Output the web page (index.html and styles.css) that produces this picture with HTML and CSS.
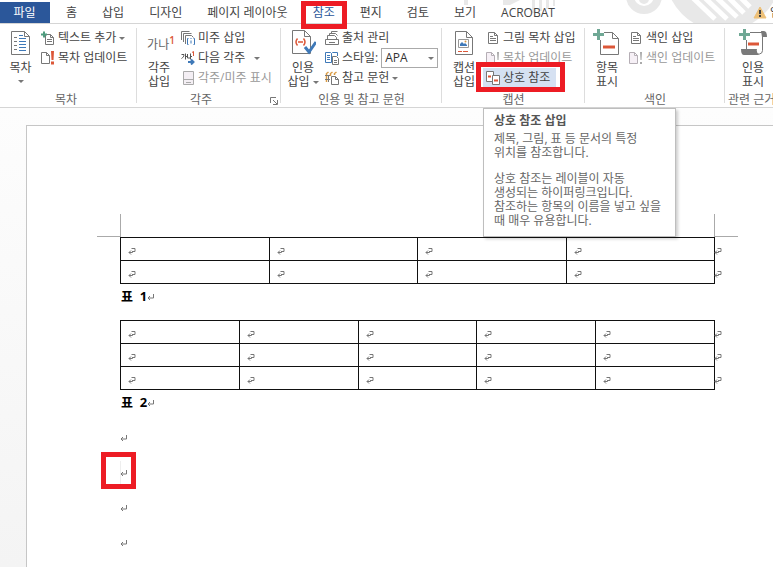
FILE: index.html
```html
<!DOCTYPE html>
<html lang="ko">
<head>
<meta charset="utf-8">
<title>문서</title>
<link rel="stylesheet" href="styles.css">
</head>
<body>
<svg class="symbols" aria-hidden="true">
  <symbol id="cell-mark" viewBox="0 0 8 8"><path d="M3 3.500L1 5.500l2 2M1 5.500h3.500V4M3.500 1.500h3.500v3h-2" fill="none" stroke="#777"/></symbol>
  <symbol id="para-mark" viewBox="0 0 8 8"><path d="M3 3L1 5l2 2M1 5h5.500V1" fill="none" stroke="#777"/></symbol>
  <symbol id="page" viewBox="0 0 14 14"><path d="M2.500 1.500h6l3 3v8h-9zM8.500 1.500v3h3" fill="#fff" stroke="#777"/><path d="M4 5.500h3M4 7.500h6M4 9.500h6" stroke="#777"/></symbol>
  <symbol id="page-alert-off" viewBox="0 0 14 14"><path d="M.5 1.500h5l3 3v8h-8zM5.500 1.500v3h3" fill="#f6f0f6" stroke="#b5aeb5"/><path d="M11 1h2l-.5 8h-1zM11 11h2v2h-2z" fill="#aaa"/></symbol>
</svg>
<header>
  <nav class="tabs">
    <svg class="decor" viewBox="0 0 333 23" aria-hidden="true">
      <g fill="#e8e8e8"><path d="M24 0h4v5h-4zM63 0h17l-10 5h-7zM92 0h3v13h-3zM99 0h3v11h-3zM106 0h3v9h-3zM113 0h2v6h-2z"/><circle cx="204" cy="-1" r="5"/><circle cx="283" cy="-27" r="58"/></g>
      <circle cx="204" cy="-4" r="14" fill="none" stroke="#e8e8e8" stroke-width="8"/>
      <path d="M253-2l22 21M265-2l22 21M277-2l20 19M289-2l15 15M301-2l9 9" stroke="#fff" stroke-width="5"/>
    </svg>
    <button class="tab file">파일</button>
    <button class="tab">홈</button>
    <button class="tab">삽입</button>
    <button class="tab">디자인</button>
    <button class="tab">페이지 레이아웃</button>
    <button class="tab current">참조<span class="frame frame-tab"></span></button>
    <button class="tab">편지</button>
    <button class="tab">검토</button>
    <button class="tab">보기</button>
    <button class="tab">ACROBAT</button>
    <button class="notice" aria-label="알림"><svg width="14" height="13" viewBox="0 0 14 13"><path d="M7 1l6 11H1z" fill="#edc078" stroke="#edc078" stroke-linejoin="round"/><path d="M6 4h2v4H6zM6 9h2v2H6z" fill="#444"/></svg><span>업</span></button>
  </nav>

  <div class="ribbon">
    <section class="group first">
      <div class="tools">
        <button class="large"><svg width="22" height="28" viewBox="0 0 22 28"><path d="M1.500 2.500h13l5 5v18h-18zM14.500 2.500v5h5" fill="#fff" stroke="#777"/><path d="M4 8.500h3M4 12.500h3M4 16.500h3M4 20.500h3" stroke="#777"/><path d="M9 6.500h4M9 9.500h7M9 12.500h7M9 15.500h7M9 18.500h7M9 21.500h7" stroke="#3f79b8"/></svg><span>목차</span><i class="arrow drop"></i></button>
        <div class="commands">
          <button class="small"><svg viewBox="0 0 14 14"><path d="M4.500 3.500h5l3 3v7h-8zM9.500 3.500v3h3" fill="#fff" stroke="#777"/><path d="M6 8.500h5M6 10.500h5" stroke="#777"/><path d="M0 3.500h6M3 .5v6" stroke="#4f9d7f" stroke-width="2"/></svg>텍스트 추가<i class="arrow"></i></button>
          <button class="small"><svg viewBox="0 0 14 14"><path d="M.5 1.500h5l3 3v8h-8zM5.500 1.500v3h3" fill="#fff" stroke="#777"/><path d="M10 0h3l-.5 9h-2zM10 10.500h3v3h-3z" fill="#dc5738"/></svg>목차 업데이트</button>
        </div>
      </div>
      <h2>목차</h2>
    </section>

    <section class="group notes">
      <div class="tools">
        <button class="large"><span class="footnote">가나<sup>1</sup></span><span>각주<br>삽입</span></button>
        <div class="commands">
          <button class="small"><svg viewBox="0 0 14 14"><path d="M.5 9V.5h8M2.500 11V2.500h8M4.500 13V4.500h6l2 2" fill="none" stroke="#777"/><path d="M7.500 7.500h-1v6h1M12.500 7.500h1v6h-1M10 9.500v3M10 7v1" fill="none" stroke="#3f79b8"/></svg>미주 삽입</button>
          <button class="small"><svg viewBox="0 0 14 14"><path d="M.5 3.500H3c0 2-1 3-2.500 4M4.500 2.500v6M4.500 5.500H6M6.500 3v4H9M9.500 2.500v6M9.500 5.500H11" fill="none" stroke="#555"/><path d="M11 1.500l1.500-1V5" fill="none" stroke="#dc5738"/><path d="M7 11h5M10 8.500l2.500 2.500-2.500 2.500" fill="none" stroke="#3f79b8" stroke-width="2"/></svg>다음 각주<i class="arrow far"></i></button>
          <button class="small" disabled><svg viewBox="0 0 14 14"><path d="M2.500.5h10v13h-10zM2.500 8.500h10M5 11.500h5" fill="#f4eff4" stroke="#aaa"/></svg>각주/미주 표시</button>
        </div>
      </div>
      <h2>각주</h2>
      <button class="launcher" aria-label="각주 및 미주 옵션"><svg width="8" height="8" viewBox="0 0 8 8"><path d="M.5 6V.5H6M3 3l4 4M7.500 3v4.500H3" fill="none" stroke="#777"/></svg></button>
    </section>

    <section class="group">
      <div class="tools">
        <button class="large"><svg width="26" height="28" viewBox="0 0 26 28"><path d="M2.500 1.500h12l6 6v17h-18zM14.500 1.500v6h6" fill="#fff" stroke="#777"/><path d="M7.500 9.500q-3 3.500 0 7M13.500 9.500q3 3.500 0 7M8 13h5" fill="none" stroke="#dc5738" stroke-width="1.500"/><path d="M15 18l4 5 7-10" fill="none" stroke="#3f79b8" stroke-width="3"/></svg><span>인용<br>삽입<i class="arrow"></i></span></button>
        <div class="commands">
          <button class="small"><svg viewBox="0 0 14 14"><path d="M.5 8.500h13v5H.5zM2.500 8V4.500h7l2 2V8M4.500 4V2.500h6l2 2M6.500 2V.5h6M4 11.500h6" fill="none" stroke="#777"/></svg>출처 관리</button>
          <div class="style-row"><svg viewBox="0 0 14 14"><path d="M6.500 2.500v9M6.500 11.500h-6v-10h5l1 1 1-1h5V5" fill="#fff" stroke="#3f79b8"/><path d="M2 4.500h3M2 6.500h3M2 8.500h3" stroke="#3f79b8"/><path d="M7.500 5.500h4l2 2v6h-6zM9 9.500h3M9 11.500h3" fill="#fff" stroke="#777"/></svg><label for="style">스타일:</label><span class="combo"><select id="style"><option>APA</option></select><i class="arrow"></i></span></div>
          <button class="small"><svg viewBox="0 0 14 14"><path d="M1.500 11V2.500l2-1.500M5.500 5V2.500l2-1.500M9.500 4V2.500l2-1.500" fill="none" stroke="#d99b45" stroke-width="1.500"/><path d="M0 4.500h5M0 8.500h5M3.500 4v7" stroke="#777"/><path d="M6.500 5.500h4l3 3v5h-7zM10.500 5.500v3h3" fill="#fff" stroke="#777"/></svg>참고 문헌<i class="arrow"></i></button>
        </div>
      </div>
      <h2>인용 및 참고 문헌</h2>
    </section>

    <section class="group">
      <div class="tools">
        <button class="large"><svg width="22" height="28" viewBox="0 0 22 28"><path d="M2.500 2.500h11l6 6v17h-17zM13.500 2.500v6h6" fill="#fff" stroke="#777"/><path d="M5.500 10.500h10v8h-10z" fill="#fff" stroke="#999"/><path d="M7 17v-2l2-2 2 2 1-1 2 2v1z" fill="#3f79b8"/><circle cx="12.500" cy="12.500" r="1" fill="#d99b45"/><path d="M5 22.500h4M10 22.500h5" stroke="#dc5738"/></svg><span>캡션<br>삽입</span></button>
        <div class="commands">
          <button class="small"><svg><use href="#page"/></svg>그림 목차 삽입</button>
          <button class="small" disabled><svg><use href="#page-alert-off"/></svg>목차 업데이트</button>
          <div class="anchor">
            <button class="small hover" aria-describedby="tip"><svg viewBox="0 0 14 14"><path d="M.5.5h7v10h-7z" fill="#fff" stroke="#777"/><path d="M2 5.500h3" stroke="#dc5738" stroke-width="2"/><path d="M6.500 4.500h7v9h-7z" fill="#fff" stroke="#777"/><path d="M8 9.500h4" stroke="#dc5738" stroke-width="2"/></svg>상호 참조</button>
            <span class="frame frame-command"></span>
            <div class="tooltip" id="tip" role="tooltip">
              <h3>상호 참조 삽입</h3>
              <p>제목, 그림, 표 등 문서의 특정<br>위치를 참조합니다.</p>
              <p>상호 참조는 레이블이 자동<br>생성되는 하이퍼링크입니다.<br>참조하는 항목의 이름을 넣고 싶을<br>때 매우 유용합니다.</p>
            </div>
          </div>
        </div>
      </div>
      <h2>캡션</h2>
    </section>

    <section class="group">
      <div class="tools">
        <button class="large"><svg width="28" height="28" viewBox="0 0 28 28"><path d="M7.500 3.500h12l6 6v16h-18zM19.500 3.500v6h6" fill="#fff" stroke="#777"/><path d="M0 5.500h11M5.500 0v11" stroke="#fff" stroke-width="5"/><path d="M0 5.500h11M5.500 0v11" stroke="#6fa895" stroke-width="3"/><path d="M10 18h12" stroke="#dc5738" stroke-width="3"/></svg><span>항목<br>표시</span></button>
        <div class="commands">
          <button class="small"><svg><use href="#page"/></svg>색인 삽입</button>
          <button class="small" disabled><svg><use href="#page-alert-off"/></svg>색인 업데이트</button>
        </div>
      </div>
      <h2>색인</h2>
    </section>

    <section class="group last">
      <div class="tools">
        <button class="large"><svg width="28" height="28" viewBox="0 0 28 28"><path d="M7.500 20V3.500h16v18q0 3-3 3.500H6" fill="#fff" stroke="#777"/><path d="M22 2h3q3 0 3 6h-5zM2 20h16q-1 3 2 6H5q-3 0-3-6" fill="#7a7a7a"/><path d="M0 5.500h11M5.500 0v11" stroke="#fff" stroke-width="5"/><path d="M0 5.500h11M5.500 0v11" stroke="#6fa895" stroke-width="3"/><path d="M9 15h11" stroke="#dc5738" stroke-width="3"/></svg><span>인용<br>표시</span></button>
      </div>
      <h2>관련 근거</h2>
    </section>
  </div>
</header>

<main>
  <article class="page">
    <div class="margins"><i></i><i></i></div>
    <table>
      <tr><td><svg><use href="#cell-mark"/></svg></td><td><svg><use href="#cell-mark"/></svg></td><td><svg><use href="#cell-mark"/></svg></td><td><svg><use href="#cell-mark"/></svg><svg class="row-end"><use href="#cell-mark"/></svg></td></tr>
      <tr><td><svg><use href="#cell-mark"/></svg></td><td><svg><use href="#cell-mark"/></svg></td><td><svg><use href="#cell-mark"/></svg></td><td><svg><use href="#cell-mark"/></svg><svg class="row-end"><use href="#cell-mark"/></svg></td></tr>
    </table>
    <p class="caption">표&nbsp; 1<svg><use href="#para-mark"/></svg></p>
    <table>
      <tr><td><svg><use href="#cell-mark"/></svg></td><td><svg><use href="#cell-mark"/></svg></td><td><svg><use href="#cell-mark"/></svg></td><td><svg><use href="#cell-mark"/></svg></td><td><svg><use href="#cell-mark"/></svg><svg class="row-end"><use href="#cell-mark"/></svg></td></tr>
      <tr><td><svg><use href="#cell-mark"/></svg></td><td><svg><use href="#cell-mark"/></svg></td><td><svg><use href="#cell-mark"/></svg></td><td><svg><use href="#cell-mark"/></svg></td><td><svg><use href="#cell-mark"/></svg><svg class="row-end"><use href="#cell-mark"/></svg></td></tr>
      <tr><td><svg><use href="#cell-mark"/></svg></td><td><svg><use href="#cell-mark"/></svg></td><td><svg><use href="#cell-mark"/></svg></td><td><svg><use href="#cell-mark"/></svg></td><td><svg><use href="#cell-mark"/></svg><svg class="row-end"><use href="#cell-mark"/></svg></td></tr>
    </table>
    <p class="caption">표&nbsp; 2<svg><use href="#para-mark"/></svg></p>
    <div class="blanks">
      <p class="blank"><svg><use href="#para-mark"/></svg></p>
      <p class="blank cursor"><svg><use href="#para-mark"/></svg><span class="frame frame-cursor"></span></p>
      <p class="blank"><svg><use href="#para-mark"/></svg></p>
      <p class="blank"><svg><use href="#para-mark"/></svg></p>
    </div>
  </article>
</main>
</body>
</html>
```
FILE: styles.css
```css
* { box-sizing: border-box; }

body {
  margin: 0;
  min-height: 100vh;
  display: flex;
  flex-direction: column;
  overflow: hidden;
  background: #fff;
  color: #444;
  font: 12px/14px "Open Sans", "Noto Sans CJK KR", sans-serif;
}

button {
  margin: 0;
  padding: 0;
  border: 0;
  background: none;
  color: inherit;
  font: inherit;
  white-space: nowrap;
}

button:disabled { color: #999; }
h2, h3, p { margin: 0; font-size: 12px; font-weight: 400; }
.symbols { position: absolute; width: 0; height: 0; }

.tabs {
  position: relative;
  display: flex;
  height: 24px;
  padding-top: 2px;
  border-bottom: 1px solid #d5d5d5;
}

.decor {
  position: absolute;
  top: 0;
  right: 0;
  width: 333px;
  height: 23px;
}

.tab { position: relative; padding: 0 13px 0 12px; }
.tab.file { width: 50px; margin-right: 4px; background: #2b579a; color: #fff; }
.tab.current { color: #2b579a; }

.notice {
  position: relative;
  display: flex;
  align-items: center;
  gap: 3px;
  width: 20px;
  margin-left: auto;
  overflow: hidden;
}
.notice svg { flex: none; }

.frame {
  position: absolute;
  z-index: 3;
  border: 5px solid #ed1c24;
  pointer-events: none;
}
.frame-tab { inset: -1px 1px -6px 0; }
.frame-command { inset: -6px -9px -4px -7px; }
.frame-cursor { left: -19px; top: -3px; width: 35px; height: 37px; }

.ribbon {
  display: grid;
  grid-template-columns: 137px 144px 161px 143px 140px 1fr;
  height: 84px;
  border-bottom: 1px solid #d5d5d5;
}

.group { position: relative; min-width: 0; padding-top: 4px; }
.group:not(.last)::after {
  content: "";
  position: absolute;
  inset: 4px 0 4px auto;
  border-right: 1px solid #ddd;
}
.tools { display: flex; height: 64px; }
.group h2 { color: #666; text-align: center; white-space: nowrap; line-height: 15px; }
.group.first h2 { padding-right: 5px; }
.group.notes h2 { padding-right: 16px; }
.group.first .large { width: 41px; }
.group.last { overflow: hidden; }
.group.last .large { width: 56px; }
.group.last h2 { padding-left: 3px; text-align: left; }

.large {
  display: flex;
  flex: none;
  flex-direction: column;
  align-items: center;
  width: 44px;
  padding-top: 1px;
}
.large svg { margin-bottom: 4px; }

.footnote {
  height: 32px;
  padding: 9px 0 0 4px;
  color: #666;
  font-size: 12px;
}
.footnote sup { color: #dc5738; font-weight: 600; line-height: 0; }

.commands { display: flex; flex-direction: column; align-items: flex-start; margin-left: -3px; }
.small, .style-row {
  display: flex;
  align-items: center;
  height: 20px;
  padding: 0 6px 0 3px;
}
.small svg, .style-row svg { flex: none; width: 14px; height: 14px; margin-right: 3px; }
.small.hover { background: #d5e1f2; }

.arrow {
  display: inline-block;
  border: 3px solid transparent;
  border-top-color: #777;
  border-bottom: 0;
  margin-left: 3px;
  vertical-align: middle;
}
.arrow.far { margin-left: 9px; }
.arrow.drop { margin: 5px 0 0; }

.style-row { padding-right: 0; }
.combo { position: relative; width: 57px; height: 20px; margin-left: 3px; }
.combo select {
  width: 100%;
  height: 100%;
  padding: 0 3px;
  border: 1px solid #aaa;
  border-radius: 0;
  appearance: none;
  background: #fff;
  color: #333;
  font: inherit;
}
.combo .arrow { position: absolute; right: 4px; top: 9px; pointer-events: none; }
.launcher { position: absolute; right: 3px; bottom: 2px; line-height: 0; }

.anchor { position: relative; }
.tooltip {
  position: absolute;
  z-index: 2;
  top: 40px;
  left: 0;
  width: 193px;
  padding: 5px 10px 8px;
  border: 1px solid #bebebe;
  background: #fff;
  box-shadow: 2px 2px 3px #0003;
  color: #666;
  line-height: 14px;
  white-space: nowrap;
}
.tooltip h3 { margin-bottom: 4px; color: #555; font-weight: 600; }
.tooltip p + p { margin-top: 12px; }

main {
  display: flex;
  flex: 1;
  padding: 17px 0 0 26px;
  background: linear-gradient(#fdfdfd, #f4f4f4);
}
.page {
  flex: 1;
  padding: 88px 58px 0 93px;
  border: solid #c6c6c6;
  border-width: 1px 0 0 1px;
  background: #fff;
}

.margins { display: flex; justify-content: space-between; margin: 0 -23px; }
.margins i { width: 24px; height: 23px; border: solid #aaa; border-width: 0 1px 1px 0; }
.margins i + i { border-width: 0 0 1px 1px; }

table { width: 100%; border-collapse: collapse; table-layout: fixed; }
td { position: relative; height: 23px; padding: 4px 0 0 7px; border: 1px solid #111; line-height: 0; }
.page svg { width: 8px; height: 8px; }
.row-end { position: absolute; left: 100%; top: 9px; }

.caption {
  height: 36px;
  padding: 5px 0 0 1px;
  color: #000;
  font-size: 13px;
  font-weight: 700;
  line-height: 14px;
}
.blanks { margin-top: -6px; }
.blank { position: relative; display: flex; align-items: center; height: 35px; }
.cursor::before { content: ""; position: absolute; inset: 6px auto 6px 0; border-left: 1px solid #eee; }
```
